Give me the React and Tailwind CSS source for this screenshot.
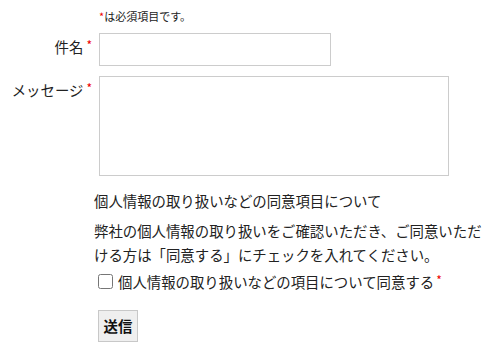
import React from 'react';

export default function App() {
  return (
    <div className="w-[500px] h-[349px] bg-white text-[#222] font-['Noto_Sans_CJK_JP','Noto_Sans',sans-serif] overflow-hidden">
      {/* 必須の注記 */}
      <p className="pl-[99px] pt-[8px] text-[11px] leading-[16px]">
        <span className="text-[#e00]">*</span>は必須項目です。
      </p>

      {/* 件名 */}
      <div className="flex items-start gap-[7px] mt-[9px]">
        <label className="w-[92px] text-right text-[14.4px] leading-[28px] whitespace-nowrap">
          件名<span className="text-[#e00] text-[12px] leading-none align-[3px] ml-[3px]">*</span>
        </label>
        <input type="text" className="w-[232px] h-[33px] border border-[#ccc] bg-white outline-none" />
      </div>

      {/* メッセージ */}
      <div className="flex items-start gap-[7px] mt-[10px]">
        <label className="w-[92px] text-right text-[14.4px] leading-[28px] whitespace-nowrap">
          メッセージ<span className="text-[#e00] text-[12px] leading-none align-[3px] ml-[3px]">*</span>
        </label>
        <textarea className="w-[350px] h-[100px] border border-[#ccc] bg-white outline-none resize-none" />
      </div>

      {/* 同意 */}
      <div className="pl-[94px] mt-[13px] w-[490px] text-[14.4px] leading-[24px]">
        <p>個人情報の取り扱いなどの同意項目について</p>
        <p className="mt-[6px] w-[392px]">
          弊社の個人情報の取り扱いをご確認いただき、ご同意いただける方は「同意する」にチェックを入れてください。
        </p>
        <label className="flex items-center gap-[5px] pl-[4px] mt-[2px] h-[25px] whitespace-nowrap">
          <input type="checkbox" className="w-[15px] h-[15px] m-0" />
          <span>
            個人情報の取り扱いなどの項目について同意する
            <span className="text-[#e00] text-[12px] leading-none align-[3px] ml-[2px]">*</span>
          </span>
        </label>
        <button className="ml-[4px] mt-[16px] w-[40px] h-[32px] bg-[#efefef] border border-[#c8c8c8] text-[14.4px] font-bold leading-none text-[#111]">
          送信
        </button>
      </div>
    </div>
  );
}
